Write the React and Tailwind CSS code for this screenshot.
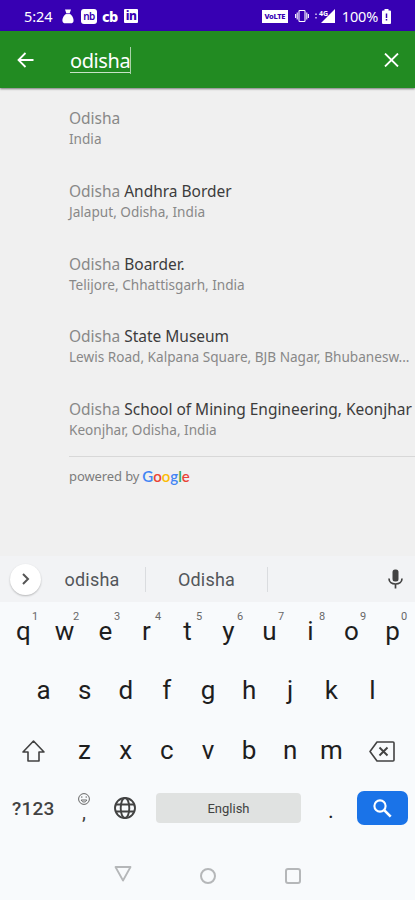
const results = [
  { match: 'Odisha', rest: '', place: 'India' },
  { match: 'Odisha', rest: 'Andhra Border', place: 'Jalaput, Odisha, India' },
  { match: 'Odisha', rest: 'Boarder.', place: 'Telijore, Chhattisgarh, India' },
  { match: 'Odisha', rest: 'State Museum', place: 'Lewis Road, Kalpana Square, BJB Nagar, Bhubanesw...' },
  { match: 'Odisha', rest: 'School of Mining Engineering, Keonjhar', place: 'Keonjhar, Odisha, India' },
];

const topRow = ['q', 'w', 'e', 'r', 't', 'y', 'u', 'i', 'o', 'p'];
const middleRow = ['a', 's', 'd', 'f', 'g', 'h', 'j', 'k', 'l'];
const bottomRow = ['z', 'x', 'c', 'v', 'b', 'n', 'm'];

function StatusBar() {
  return (
    <div className="h-[31px] shrink-0 bg-[#3700b3] text-white flex items-center pl-[24px] pr-[24px] pt-px font-['Noto_Sans',sans-serif]">
      <span className="text-[14.5px] leading-none w-[38px] tracking-[-0.1px]">5:24</span>
      <svg className="w-[12px] h-[15px]" viewBox="0 0 12 15" fill="currentColor">
        <path d="M3 0.5h6L7.6 4.5C9.8 6 12 9.3 11.5 12.3c-.3 1.5-1.3 2-2.7 2H3.2c-1.4 0-2.4-.5-2.7-2C0 9.3 2.2 6 4.4 4.5z" />
        <path d="M3.8 4.6h4.4" stroke="#3700b3" strokeWidth="0.7" />
      </svg>
      <span className="ml-[7px] w-[16px] h-[15px] rounded-[3px] bg-white text-[#3700b3] text-[10px] font-semibold leading-[14px] text-center tracking-[-0.5px]">nb</span>
      <span className="ml-[5px] w-[17px] text-[14.5px] font-extrabold leading-none tracking-[-0.6px]">cb</span>
      <span className="ml-[5px] w-[14px] h-[14px] rounded-[1px] bg-white text-[#3700b3] text-[12px] font-extrabold leading-[13px] text-center tracking-[-0.5px]">in</span>
      <span className="ml-auto w-[26px] h-[13px] bg-white text-[#3700b3] text-[7.5px] font-extrabold leading-[13px] text-center tracking-[-0.3px] whitespace-nowrap">VoLTE</span>
      <svg className="ml-[7px] w-[14px] h-[14px]" viewBox="0 0 14 14" fill="none" stroke="currentColor" strokeWidth="1.1">
        <rect x="4" y="1.5" width="6" height="11" rx="0.8" />
        <path d="M2.2 3.5v7M0.6 5v4M11.8 3.5v7M13.4 5v4" />
      </svg>
      <svg className="ml-[5px] w-[21px] h-[14px]" viewBox="0 0 21 14" fill="currentColor">
        <path d="M21 0v14H7z" />
        <path d="M1 4.5h2v1.5H1zM1 8h2v1.5H1z" opacity="0.6" />
        <text x="5" y="6.5" fontSize="7" fontWeight="700">4G</text>
      </svg>
      <span className="ml-[7px] text-[14.5px] leading-none tracking-[-0.2px]">100%</span>
      <svg className="ml-[4px] w-[9px] h-[15px]" viewBox="0 0 9 15" fill="currentColor">
        <path d="M2.5 0h4v1.5H8a1 1 0 0 1 1 1V14a1 1 0 0 1-1 1H1a1 1 0 0 1-1-1V2.5a1 1 0 0 1 1-1h1.5z" />
        <path d="M4.5 4.5v4.5M4.5 10v1.5" stroke="#3700b3" strokeWidth="1.5" />
      </svg>
    </div>
  );
}

function SearchBar() {
  return (
    <div className="relative h-[57px] shrink-0 bg-[#228b22] text-white flex items-center pl-[17px] pr-[16px] shadow-[0_1px_2px_rgba(0,0,0,0.5)]">
      <svg className="w-[17px] h-[16px]" viewBox="0 0 17 16" fill="none" stroke="currentColor" strokeWidth="1.8">
        <path d="M16.5 8H1.5M8.5 1L1.5 8l7 7" />
      </svg>
      <div className="ml-[36px] mt-[2px] h-[27px] flex items-center border-r border-[#a9d2a9]">
        <span className="h-[24px] border-b border-[#c8e3c8] text-[20px] leading-[23px] tracking-[-0.4px] font-['Noto_Sans',sans-serif]">odisha</span>
      </div>
      <svg className="ml-auto w-[15px] h-[14px]" viewBox="0 0 15 14" fill="none" stroke="currentColor" strokeWidth="1.8">
        <path d="M1 0.5l13 13M14 0.5l-13 13" />
      </svg>
    </div>
  );
}

function ResultList() {
  return (
    <div className="h-[468px] shrink-0 bg-[#f0f0f0] pl-[69px] pt-[20px] font-['Noto_Sans',sans-serif] whitespace-nowrap overflow-hidden">
      {results.map((item, index) => (
        <div key={index} className="h-[72.8px]">
          <div className="text-[15.5px] leading-[21px] text-[#3c3c3c] tracking-[-0.02px]">
            <span className="text-[#888]">{item.match}</span> {item.rest}
          </div>
          <div className="text-[13.6px] leading-[20px] text-[#888]">{item.place}</div>
        </div>
      ))}
      <div className="-mt-[16px] border-t border-[#d8d8d8]" />
      <div className="mt-[9px] flex items-center text-[13px] leading-[20px] text-[#7c7c7c]">
        <span className="tracking-[-0.1px]">powered by</span>
        <span className="ml-[3px] font-['Lato',sans-serif] text-[15px] font-semibold">
          <span className="text-[#4285f4]">G</span>
          <span className="text-[#ea4335]">o</span>
          <span className="text-[#fbbc05]">o</span>
          <span className="text-[#4285f4]">g</span>
          <span className="text-[#34a853]">l</span>
          <span className="text-[#ea4335]">e</span>
        </span>
      </div>
    </div>
  );
}

function Suggestions() {
  return (
    <div className="h-[46px] shrink-0 bg-[#f2f3f5] flex items-center text-[18px] text-[#53565a]">
      <div className="ml-[10px] w-[31px] h-[31px] rounded-full bg-white shadow-[0_1px_2px_rgba(0,0,0,0.25)] flex items-center justify-center">
        <svg className="w-[8px] h-[12px]" viewBox="0 0 8 12" fill="none" stroke="#555" strokeWidth="2">
          <path d="M1 1l5 5-5 5" />
        </svg>
      </div>
      <div className="w-[104px] text-center tracking-[0.2px] pt-px pr-[2px]">odisha</div>
      <div className="w-px h-[25px] bg-[#dadcdf]" />
      <div className="w-[121px] text-center tracking-[0.2px] pt-px">Odisha</div>
      <div className="w-px h-[25px] bg-[#dadcdf]" />
      <svg className="ml-auto mr-[12px] w-[15px] h-[20px]" viewBox="0 0 15 20" fill="none" stroke="#424242">
        <rect x="4.5" y="0.5" width="6" height="12" rx="2.5" fill="#424242" stroke="none" />
        <path d="M1 9.5c0 3.5 2.8 5.5 6.5 5.5s6.5-2 6.5-5.5M7.5 15v4.5" strokeWidth="1.7" />
      </svg>
    </div>
  );
}

function Key({ label, hint }) {
  return (
    <div className="relative h-full flex items-center justify-center">
      {label}
      {hint !== undefined && <span className="absolute left-[29px] top-[8px] text-[11px] leading-[13px] text-[#686868]">{hint}</span>}
    </div>
  );
}

function Keyboard() {
  return (
    <div className="h-[298px] shrink-0 bg-[#f8fafc] text-[26px] leading-none text-[#1e1e1e]">
      <div className="h-[58px] ml-[3px] w-[410px] grid grid-cols-10">
        {topRow.map((letter, index) => (
          <Key key={letter} label={letter} hint={(index + 1) % 10} />
        ))}
      </div>
      <div className="h-[59px] ml-[23px] w-[370px] grid grid-cols-9">
        {middleRow.map((letter) => <Key key={letter} label={letter} />)}
      </div>
      <div className="h-[60px] flex items-center">
        <div className="w-[64px] flex justify-center pl-[2px] pt-[3px]">
          <svg className="w-[23px] h-[22px]" viewBox="0 0 23 22" fill="none" stroke="#424242" strokeWidth="1.6" strokeLinejoin="round">
            <path d="M11.5 1L1 12h5v9h11v-9h5z" />
          </svg>
        </div>
        <div className="h-full w-[288px] pt-px grid grid-cols-7">
          {bottomRow.map((letter) => <Key key={letter} label={letter} />)}
        </div>
        <svg className="ml-[17px] mt-[4px] w-[26px] h-[21px]" viewBox="0 0 26 21" fill="none" stroke="#424242" strokeWidth="1.6" strokeLinejoin="round">
          <path d="M8 1h16a1 1 0 0 1 1 1v17a1 1 0 0 1-1 1H8l-7-9.5z" />
          <path d="M10.5 6.5l8 8M18.5 6.5l-8 8" strokeWidth="1.9" />
        </svg>
      </div>
      <div className="h-[58px] flex items-center">
        <span className="ml-[12px] w-[64px] text-[19px] font-medium tracking-[0.2px] text-[#424242]">?123</span>
        <div className="w-[16px] h-[30px] flex flex-col items-center">
          <svg className="w-[12px] h-[12px] shrink-0" viewBox="0 0 12 12" fill="none" stroke="#666" strokeWidth="1">
            <circle cx="6" cy="6" r="5.4" />
            <path d="M3.2 7c.8 2.7 4.8 2.7 5.6 0z" />
            <path d="M3.8 3.3v1.5M8.2 3.3v1.5" />
          </svg>
          <span className="text-[20px] leading-[14px] text-[#424242]">,</span>
        </div>
        <svg className="ml-[22px] w-[22px] h-[22px]" viewBox="0 0 22 22" fill="none" stroke="#424242" strokeWidth="1.9">
          <circle cx="11" cy="11" r="10" />
          <ellipse cx="11" cy="11" rx="4.3" ry="10" />
          <path d="M2 7.5h18M2 14.5h18" />
        </svg>
        <div className="ml-[20px] w-[145px] h-[30px] rounded-[4px] bg-[#e0e2e1] text-[13px] leading-[32px] text-center text-[#424242]">English</div>
        <span className="ml-[27px] w-[8px] pt-[5px] text-[22px]">.</span>
        <div className="ml-[21px] w-[51px] h-[34px] rounded-[7px] bg-[#1a73e8] flex items-center justify-center">
          <svg className="w-[19px] h-[19px]" viewBox="0 0 19 19" fill="none" stroke="#fff">
            <circle cx="7" cy="7" r="5.6" strokeWidth="2.1" />
            <path d="M11.2 11.2l6.5 6.5" strokeWidth="2.6" />
          </svg>
        </div>
      </div>
      <div className="h-[63px] pt-[14px] flex items-center text-[#b5b7b9]">
        <svg className="ml-[114px] mb-[4px] w-[18px] h-[16px]" viewBox="0 0 18 16" fill="none" stroke="currentColor" strokeWidth="1.8" strokeLinejoin="round">
          <path d="M1.5 1h15L9 14.5z" />
        </svg>
        <div className="ml-[68px] w-[16px] h-[16px] rounded-full border-2 border-current" />
        <div className="ml-[69px] w-[16px] h-[16px] rounded-[3px] border-2 border-current" />
      </div>
    </div>
  );
}

export default function App() {
  return (
    <div className="w-[415px] h-[900px] overflow-hidden flex flex-col font-['Roboto',sans-serif]">
      <StatusBar />
      <SearchBar />
      <ResultList />
      <Suggestions />
      <Keyboard />
    </div>
  );
}
